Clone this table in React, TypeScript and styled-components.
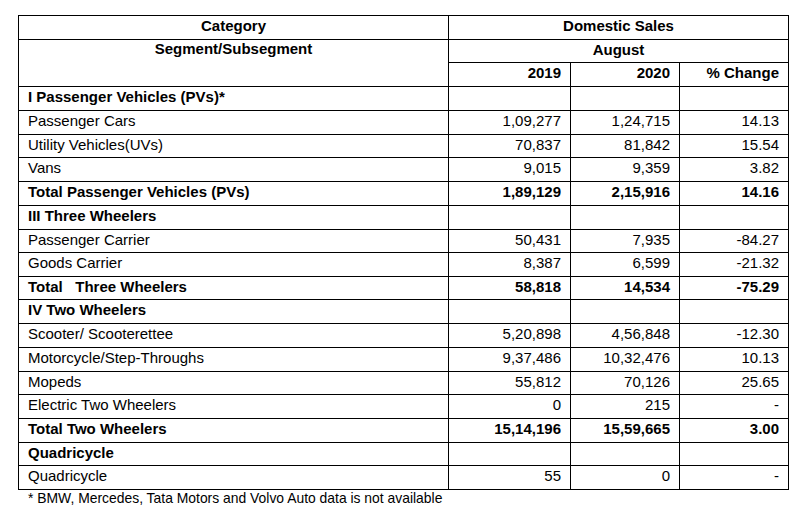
import React from "react";
import styled, { createGlobalStyle } from "styled-components";

const GlobalStyle = createGlobalStyle`
  html, body {
    margin: 0;
    padding: 0;
    background: #ffffff;
  }
  body {
    font-family: "Liberation Sans", Arial, sans-serif;
    color: #000;
  }
`;

const Page = styled.div`
  padding: 15px 0 0 18px;
  width: 806px;
  height: 519px;
  box-sizing: border-box;
`;

const Table = styled.table`
  border-collapse: collapse;
  table-layout: fixed;
  width: 770px;
  font-family: "Liberation Sans", Arial, sans-serif;
  font-size: 15px;
  color: #000;
`;

const Row = styled.tr<{ $h: number }>`
  height: ${(p) => p.$h}px;
`;

const HeadCell = styled.th<{ $align?: string; $top?: boolean }>`
  border: 1px solid #000;
  font-weight: bold;
  text-align: ${(p) => p.$align || "center"};
  vertical-align: ${(p) => (p.$top ? "top" : "middle")};
  padding: ${(p) => (p.$top ? "0 9px" : "0 9px 4px 9px")};
  white-space: nowrap;
`;

const Cell = styled.td<{ $num?: boolean; $bold?: boolean }>`
  border: 1px solid #000;
  font-weight: ${(p) => (p.$bold ? "bold" : "normal")};
  text-align: ${(p) => (p.$num ? "right" : "left")};
  vertical-align: middle;
  padding: 0 9px 4px 9px;
  white-space: pre;
`;

const Footnote = styled.div`
  font-family: "Liberation Sans", Arial, sans-serif;
  font-size: 13.9px;
  padding: 0 0 0 10px;
  color: #000;
`;

type DataRow = {
  label: string;
  v2019?: string;
  v2020?: string;
  change?: string;
  bold?: boolean;
  h: number;
};

const rows: DataRow[] = [
  { label: "I Passenger Vehicles (PVs)*", bold: true, h: 24 },
  { label: "Passenger Cars", v2019: "1,09,277", v2020: "1,24,715", change: "14.13", h: 24 },
  { label: "Utility Vehicles(UVs)", v2019: "70,837", v2020: "81,842", change: "15.54", h: 23 },
  { label: "Vans", v2019: "9,015", v2020: "9,359", change: "3.82", h: 24 },
  { label: "Total Passenger Vehicles (PVs)", v2019: "1,89,129", v2020: "2,15,916", change: "14.16", bold: true, h: 24 },
  { label: "III Three Wheelers", bold: true, h: 24 },
  { label: "Passenger Carrier", v2019: "50,431", v2020: "7,935", change: "-84.27", h: 23 },
  { label: "Goods Carrier", v2019: "8,387", v2020: "6,599", change: "-21.32", h: 24 },
  { label: "Total   Three Wheelers", v2019: "58,818", v2020: "14,534", change: "-75.29", bold: true, h: 23 },
  { label: "IV Two Wheelers", bold: true, h: 24 },
  { label: "Scooter/ Scooterettee", v2019: "5,20,898", v2020: "4,56,848", change: "-12.30", h: 24 },
  { label: "Motorcycle/Step-Throughs", v2019: "9,37,486", v2020: "10,32,476", change: "10.13", h: 24 },
  { label: "Mopeds", v2019: "55,812", v2020: "70,126", change: "25.65", h: 23 },
  { label: "Electric Two Wheelers", v2019: "0", v2020: "215", change: "-", h: 24 },
  { label: "Total Two Wheelers", v2019: "15,14,196", v2020: "15,59,665", change: "3.00", bold: true, h: 24 },
  { label: "Quadricycle", bold: true, h: 23 },
  { label: "Quadricycle", v2019: "55", v2020: "0", change: "-", h: 24 },
];

export default function App() {
  return (
    <>
      <GlobalStyle />
      <Page>
        <Table>
          <colgroup>
            <col style={{ width: 430 }} />
            <col style={{ width: 122 }} />
            <col style={{ width: 109 }} />
            <col style={{ width: 109 }} />
          </colgroup>
          <thead>
            <Row $h={24}>
              <HeadCell>Category</HeadCell>
              <HeadCell colSpan={3}>Domestic Sales</HeadCell>
            </Row>
            <Row $h={23}>
              <HeadCell rowSpan={2} $top>
                Segment/Subsegment
              </HeadCell>
              <HeadCell colSpan={3}>August</HeadCell>
            </Row>
            <Row $h={24}>
              <HeadCell $align="right">2019</HeadCell>
              <HeadCell $align="right">2020</HeadCell>
              <HeadCell $align="right">% Change</HeadCell>
            </Row>
          </thead>
          <tbody>
            {rows.map((r, i) => (
              <Row key={i} $h={r.h}>
                <Cell $bold={r.bold}>{r.label}</Cell>
                <Cell $num $bold={r.bold}>{r.v2019 ?? ""}</Cell>
                <Cell $num $bold={r.bold}>{r.v2020 ?? ""}</Cell>
                <Cell $num $bold={r.bold}>{r.change ?? ""}</Cell>
              </Row>
            ))}
          </tbody>
        </Table>
        <Footnote>* BMW, Mercedes, Tata Motors and Volvo Auto data is not available</Footnote>
      </Page>
    </>
  );
}
